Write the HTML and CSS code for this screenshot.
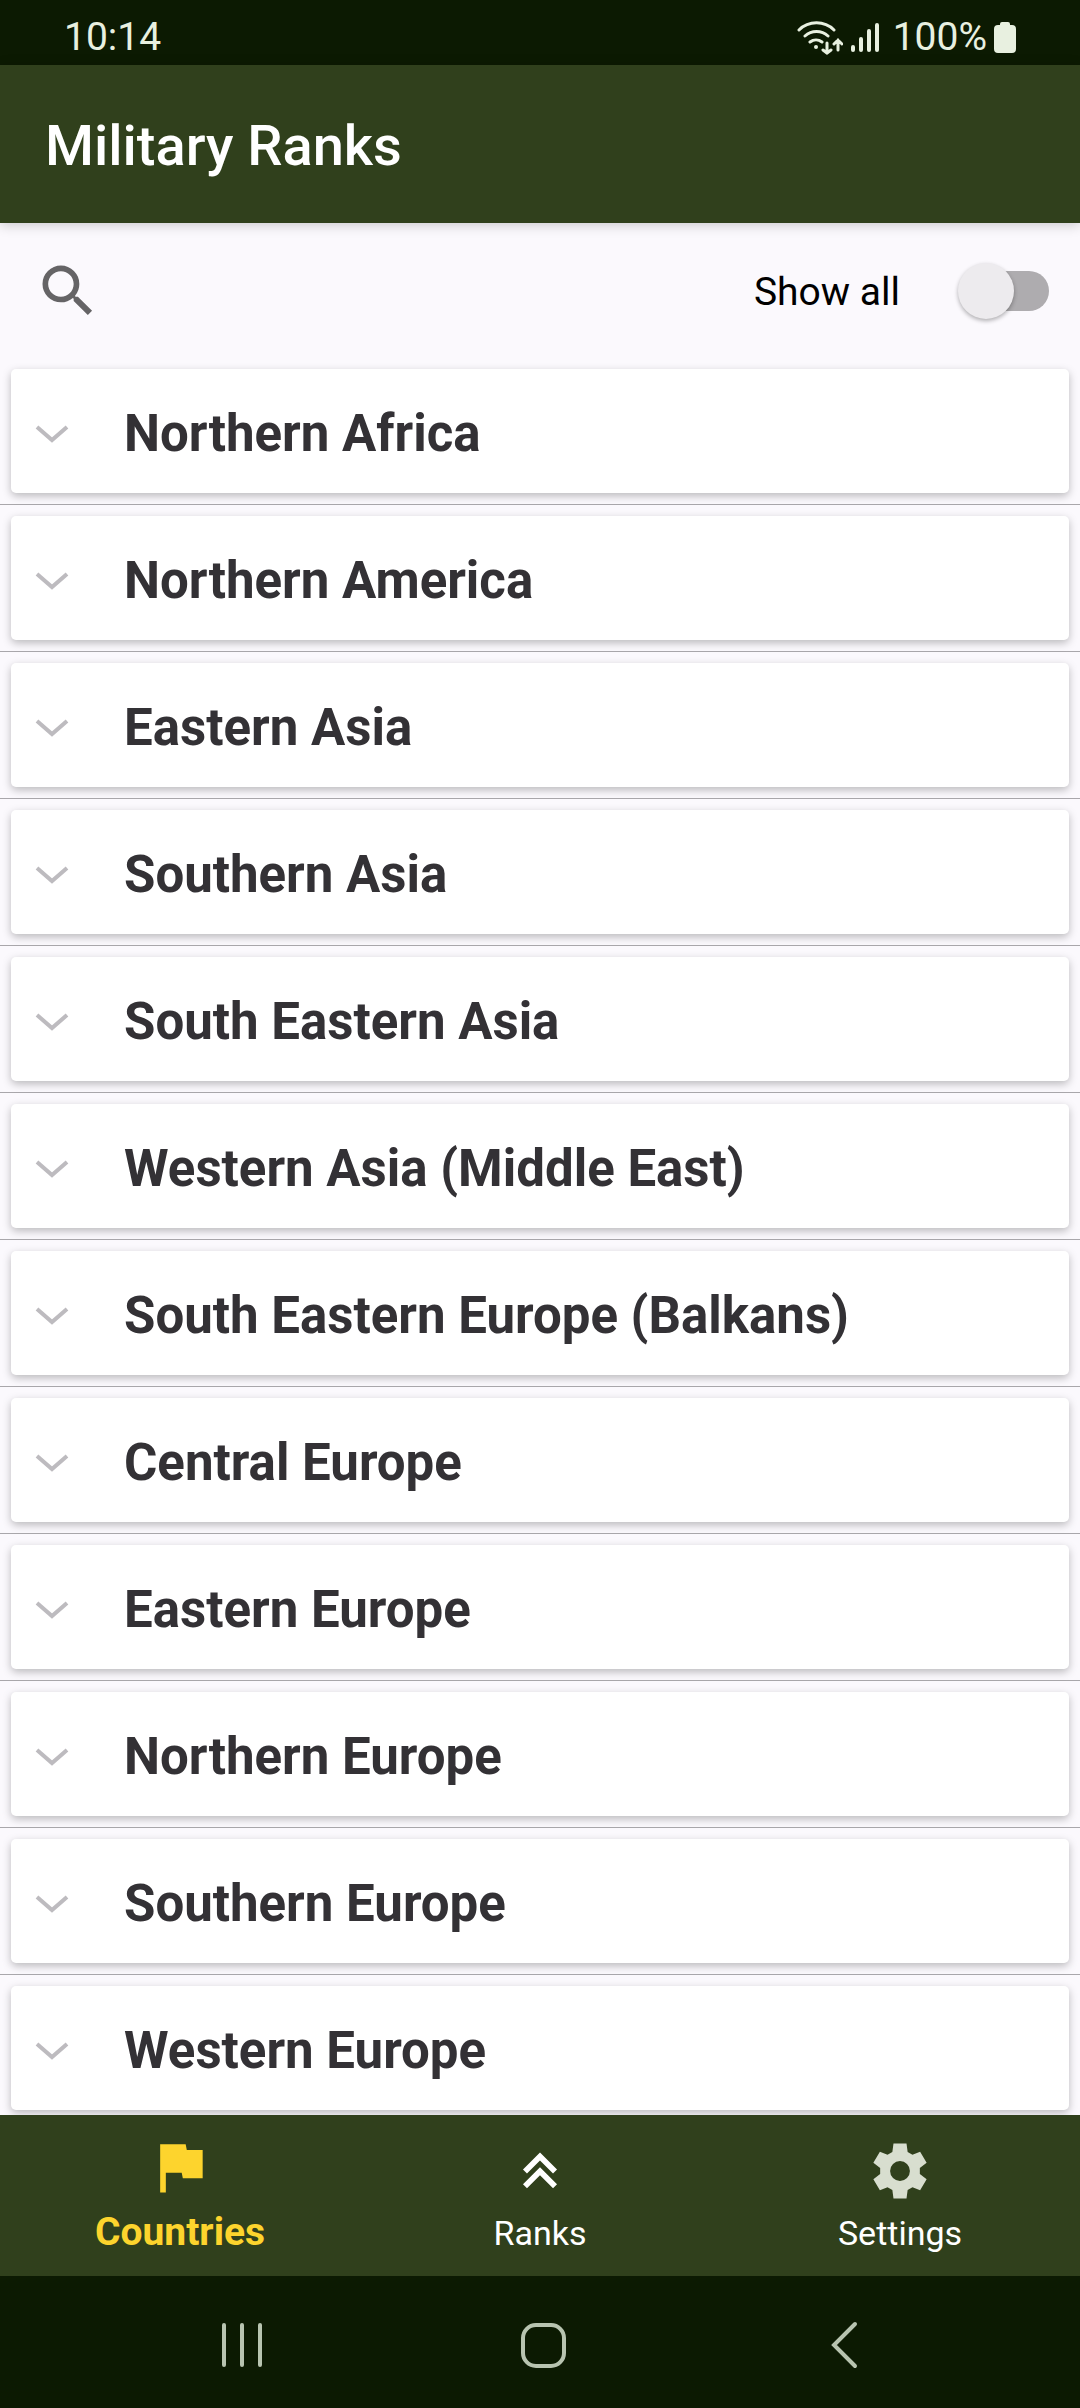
FILE: index.html
```
<!DOCTYPE html>
<html lang="en">
<head>
    <meta charset="UTF-8">
    <meta name="viewport" content="width=device-width, initial-scale=1.0">
    <title>Military Ranks</title>
    <link rel="stylesheet" href="styles.css">
</head>
<body>
<div class="status-bar">
    <span>10:14</span>
    <div class="status-icons">
        <svg class="wifi" width="46" height="36" viewBox="0 0 46 36" fill="none" stroke="currentColor" stroke-width="3" stroke-linecap="round">
            <path d="M2 11a25 25 0 0 1 35 0M8 17a17 17 0 0 1 23 0M13 23a10 10 0 0 1 12 0"/>
            <circle cx="19" cy="28" r="2" fill="currentColor" stroke="none"/>
            <path d="M30 24v10M26 31l4 3 4-3M41 31V21M37 25l4-4 4 4"/>
        </svg>
        <svg class="signal" width="28" height="36" viewBox="0 0 28 36" stroke="currentColor" stroke-width="4" stroke-linecap="round">
            <path d="M2 28v3M10 20v11M18 12v19M26 6v25"/>
        </svg>
        <span>100%</span>
        <svg class="battery" width="22" height="36" viewBox="0 0 22 36" fill="currentColor">
            <path d="M6 5a2 2 0 0 1 2-2h6a2 2 0 0 1 2 2v1h2a4 4 0 0 1 4 4v20a4 4 0 0 1-4 4H4a4 4 0 0 1-4-4V10a4 4 0 0 1 4-4h2z"/>
        </svg>
    </div>
</div>

<header class="app-bar">
    <h1>Military Ranks</h1>
</header>

<div class="toolbar">
    <button class="search" aria-label="Search">
        <svg width="68" height="68" viewBox="0 0 24 24" fill="currentColor">
            <path d="M15.5 14h-.79l-.28-.27A6.471 6.471 0 0 0 16 9.5 6.5 6.5 0 1 0 9.5 16c1.61 0 3.09-.59 4.23-1.57l.27.28v.79l5 4.99L20.49 19l-4.99-5zm-6 0C7.01 14 5 11.99 5 9.5S7.01 5 9.5 5 14 7.01 14 9.5 11.99 14 9.5 14z"/>
        </svg>
    </button>
    <label for="showAll">Show all</label>
    <input type="checkbox" role="switch" id="showAll" class="switch">
</div>

<main id="regions"></main>

<nav class="bottom-nav">
    <a href="#countries" class="active">
        <svg width="68" height="68" viewBox="0 0 24 24" fill="currentColor">
            <path d="M14.4 6L14 4H5v17h2v-7h5.6l.4 2h7V6z"/>
        </svg>
        Countries
    </a>
    <a href="#ranks">
        <svg width="68" height="68" viewBox="0 0 24 24" fill="none" stroke="currentColor" stroke-width="2">
            <path d="M6.700 12.200L12 6.900l5.300 5.300M6.700 17.400L12 12.100l5.300 5.300"/>
        </svg>
        Ranks
    </a>
    <a href="#settings">
        <svg class="gear" width="68" height="68" viewBox="0 0 24 24" fill="currentColor">
            <path fill-rule="evenodd" d="M9.700 2.300h4.600l.4 3 1.700 1 2.700-1.100 2.300 3.900-2.400 1.800v2.200l2.400 1.800-2.300 3.900-2.700-1.100-1.700 1-.4 3H9.700l-.4-3-1.700-1-2.700 1.100-2.300-3.900L5 13.100v-2.200L2.600 9.100l2.300-3.900 2.700 1.100 1.700-1zM12 8.500a3.500 3.500 0 1 0 0 7 3.500 3.500 0 0 0 0-7z"/>
        </svg>
        Settings
    </a>
</nav>

<div class="system-nav">
    <button aria-label="Recent apps">
        <svg width="48" height="48" viewBox="0 0 48 48" stroke="currentColor" stroke-width="4" stroke-linecap="round">
            <path d="M6 4v40M24 4v40M42 4v40"/>
        </svg>
    </button>
    <button aria-label="Home">
        <svg width="48" height="48" viewBox="0 0 48 48" fill="none" stroke="currentColor" stroke-width="4">
            <rect x="4" y="4" width="41" height="41" rx="13"/>
        </svg>
    </button>
    <button aria-label="Back">
        <svg width="48" height="48" viewBox="0 0 48 48" fill="none" stroke="currentColor" stroke-width="4" stroke-linecap="round">
            <path d="M35 3L14 24l21 21"/>
        </svg>
    </button>
</div>

<script>
    const regions = [
        "Northern Africa",
        "Northern America",
        "Eastern Asia",
        "Southern Asia",
        "South Eastern Asia",
        "Western Asia (Middle East)",
        "South Eastern Europe (Balkans)",
        "Central Europe",
        "Eastern Europe",
        "Northern Europe",
        "Southern Europe",
        "Western Europe"
    ];

    const list = document.getElementById("regions");
    regions.forEach(name => {
        list.innerHTML += `<div class="row">
            <button class="card" aria-expanded="false">
                <svg width="34" height="20" viewBox="0 0 34 20" fill="none" stroke="currentColor" stroke-width="4"><path d="M2 3l15 13L32 3"/></svg>
                ${name}
            </button>
        </div>`;
    });
</script>
</body>
</html>
```
FILE: styles.css
```
* {
    box-sizing: border-box;
}
body {
    font-family: Roboto, sans-serif;
    background: #fbf9fd;
    color: #000;
    display: flex;
    flex-direction: column;
    height: 100vh;
    margin: 0;
}
svg {
    display: block;
    flex: none;
}
button {
    font-family: inherit;
    border: none;
    background: none;
    padding: 0;
    cursor: pointer;
}
.status-bar {
    flex: none;
    display: flex;
    justify-content: space-between;
    align-items: center;
    height: 65px;
    padding: 8px 64px 0;
    background: #0c1a02;
    color: #e8f0e0;
    font-size: 39px;
}
.status-icons {
    display: flex;
    align-items: center;
}
.signal {
    margin: 0 14px 0 8px;
}
.battery {
    margin-left: 7px;
}
.app-bar {
    flex: none;
    display: flex;
    align-items: center;
    height: 158px;
    padding: 4px 45px 0;
    background: #30401c;
    color: #fff;
    box-shadow: 0 2px 12px rgba(0, 0, 0, 0.2);
}
h1 {
    margin: 0;
    font-size: 56px;
    font-weight: 500;
}
.toolbar {
    flex: none;
    display: flex;
    align-items: center;
    height: 135px;
    padding: 0 31px 0 34px;
    font-size: 39px;
}
.toolbar label {
    padding-top: 3px;
}
.search {
    color: #656466;
    margin-right: auto;
}
.switch {
    appearance: none;
    display: flex;
    align-items: center;
    width: 84px;
    height: 40px;
    margin: 0 0 0 65px;
    border-radius: 20px;
    background: #aeacaf;
    cursor: pointer;
}
.switch::before {
    content: "";
    flex: none;
    width: 56px;
    height: 56px;
    margin-left: -7px;
    border-radius: 50%;
    background: #edebee;
    box-shadow: 0 2px 4px rgba(0, 0, 0, 0.3);
}
.switch:checked::before {
    margin-left: 35px;
}
#regions {
    flex: 1;
    min-height: 0;
    overflow: hidden;
}
.row {
    padding: 11px;
    border-bottom: 1px solid #a9a7ab;
}
.card {
    display: flex;
    align-items: center;
    gap: 55px;
    width: 100%;
    height: 124px;
    padding: 5px 24px 0;
    border-radius: 5px;
    background: #fff;
    color: #333135;
    font-size: 51px;
    font-weight: bold;
    box-shadow: 0 3px 8px rgba(0, 0, 0, 0.26);
}
.card svg {
    color: #bdbbbf;
}
.bottom-nav {
    flex: none;
    display: flex;
    height: 161px;
    padding-top: 18px;
    background: #30401c;
}
.bottom-nav a {
    flex: 1;
    display: flex;
    flex-direction: column;
    align-items: center;
    gap: 8px;
    padding-top: 4px;
    color: #fff;
    font-size: 34px;
    line-height: 40px;
    text-decoration: none;
}
.bottom-nav .active {
    gap: 11px;
    padding-top: 0;
    color: #fdd42d;
    font-size: 39px;
    font-weight: bold;
}
.gear {
    color: #d8decf;
}
.system-nav {
    flex: none;
    display: flex;
    justify-content: space-around;
    align-items: center;
    height: 132px;
    padding: 6px 86px 0 92px;
    background: #0c1a02;
}
.system-nav button {
    color: #b8c4b0;
}
```
